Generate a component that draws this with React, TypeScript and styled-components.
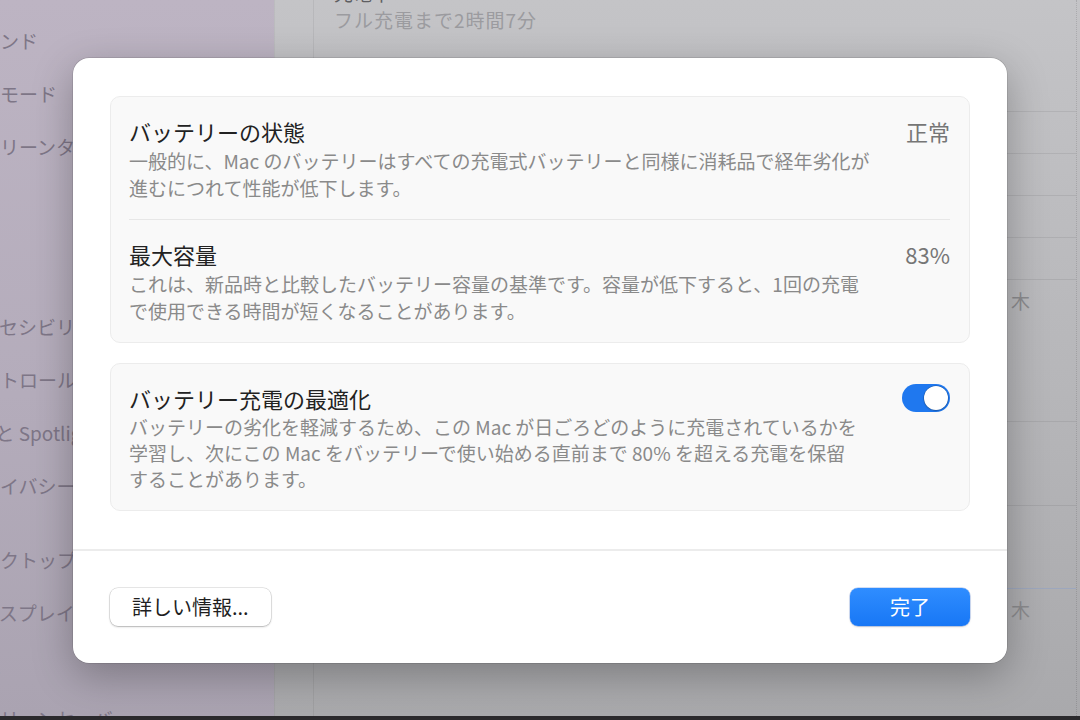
import { FunctionComponent, Fragment } from 'react';
import styled, { createGlobalStyle } from 'styled-components';

const GlobalStyle = createGlobalStyle`
  html, body {
    margin: 0;
    padding: 0;
  }
  body {
    font-family: 'Noto Sans CJK JP', 'Noto Sans', sans-serif;
  }
`;

const Screen = styled.div`
  position: relative;
  width: 1080px;
  height: 720px;
  overflow: hidden;
  display: flex;
  flex-direction: column;
  background: #b0b0b3;
`;

const Desktop = styled.div`
  flex: 1;
  display: flex;
  min-height: 0;
`;

const BottomEdge = styled.div`
  height: 4px;
  background: #2b2a2d;
`;

const Sidebar = styled.div`
  width: 274px;
  flex-shrink: 0;
  background: linear-gradient(180deg, #bdb4c3 0%, #b4acbb 55%, #aaa3b1 100%);
  padding-top: 14px;
  overflow: hidden;
`;

const SideGroup = styled.div<{ $gap?: number }>`
  margin-top: ${(p) => p.$gap || 0}px;
  margin-left: -38px;
`;

const SideItem = styled.div`
  height: 53px;
  line-height: 53px;
  font-size: 19px;
  color: #7e7687;
  white-space: nowrap;
`;

const Main = styled.div`
  flex: 1;
  display: flex;
  padding: 0 3px 0 38px;
  background: linear-gradient(180deg, #c4c4c7 0%, #b6b6b9 55%, #a9a9ac 100%);
  border-left: 1px solid rgba(0, 0, 0, 0.04);
`;

const Panel = styled.div`
  flex: 1;
  display: flex;
  flex-direction: column;
  border-left: 1px solid rgba(0, 0, 0, 0.06);
  border-right: 1px dotted rgba(0, 0, 0, 0.12);
`;

const TopRow = styled.div`
  height: 57px;
  padding-left: 20px;
  overflow: hidden;
`;

const CutTitle = styled.div`
  margin-top: -20px;
  height: 26px;
  font-size: 19px;
  line-height: 26px;
  color: #5e5e62;
`;

const TopSub = styled.div`
  font-size: 19px;
  line-height: 24px;
  margin-top: 2px;
  letter-spacing: 1px;
  color: #9b9b9f;
`;

const Chart = styled.div<{ $top: number }>`
  margin-top: ${(p) => p.$top}px;
  display: flex;
  flex-direction: column;
`;

const GridLine = styled.div<{ $gap: number; $accent?: boolean }>`
  height: 1px;
  margin-bottom: ${(p) => p.$gap}px;
  background: ${(p) => (p.$accent ? '#9da7bd' : 'rgba(0, 0, 0, 0.07)')};
`;

const AxisLabel = styled.div`
  display: flex;
  justify-content: flex-end;
  padding-right: 46px;
  margin-top: -30px;
  font-size: 19px;
  line-height: 24px;
  color: #8b8b8e;
`;

const Dialog = styled.div`
  position: absolute;
  left: 73px;
  top: 58px;
  width: 934px;
  background: #ffffff;
  border-radius: 16px;
  box-shadow: 0 0 0 0.5px rgba(0, 0, 0, 0.18), 0 12px 40px rgba(0, 0, 0, 0.28);
  display: flex;
  flex-direction: column;
  overflow: hidden;
`;

const DialogBody = styled.div`
  display: flex;
  flex-direction: column;
  gap: 20px;
  padding: 38px 37px 38px;
`;

const Group = styled.div`
  background: #f9f9f9;
  border: 1px solid #ececec;
  border-radius: 10px;
  display: flex;
  flex-direction: column;
`;

const Row = styled.div`
  display: flex;
  justify-content: space-between;
  align-items: flex-start;
  padding: 20px 19px 18px 18px;
`;

const RowText = styled.div`
  display: flex;
  flex-direction: column;
  gap: 2px;
`;

const RowTitle = styled.div`
  font-size: 22px;
  line-height: 28px;
  color: #222222;
`;

const RowDesc = styled.div<{ $tight?: boolean }>`
  font-size: 19px;
  line-height: ${(p) => (p.$tight ? '26px' : '27px')};
  color: #8a8a8a;
  white-space: nowrap;
`;

const RowValue = styled.div`
  font-size: 22px;
  line-height: 28px;
  color: #767676;
`;

const Divider = styled.div`
  height: 1px;
  margin: 0 19px 0 18px;
  background: #e7e7e7;
`;

const Toggle = styled.div<{ $on: boolean }>`
  width: 48px;
  height: 28px;
  border-radius: 14px;
  background: ${(p) => (p.$on ? '#1f78ef' : '#e2e2e2')};
  display: flex;
  align-items: center;
  justify-content: ${(p) => (p.$on ? 'flex-end' : 'flex-start')};
  padding: 0 2px;
  box-sizing: border-box;
  flex-shrink: 0;
`;

const Knob = styled.div`
  width: 24px;
  height: 24px;
  border-radius: 50%;
  background: #ffffff;
  box-shadow: 0 0 0 0.5px rgba(0, 0, 0, 0.25), 0 1px 2px rgba(0, 0, 0, 0.2);
`;

const Footer = styled.div`
  border-top: 2px solid #ececec;
  display: flex;
  justify-content: space-between;
  align-items: center;
  padding: 37px 37px 37px;
`;

const Button = styled.button<{ $primary?: boolean }>`
  height: 38px;
  min-width: ${(p) => (p.$primary ? '120px' : '0')};
  padding: 0 ${(p) => (p.$primary ? '16px' : '22px')};
  border-radius: 8px;
  border: none;
  font-family: inherit;
  font-size: 20px;
  line-height: 38px;
  color: ${(p) => (p.$primary ? '#ffffff' : '#1f1f1f')};
  background: ${(p) =>
    p.$primary ? 'linear-gradient(180deg, #2f8dff 0%, #1877f5 100%)' : '#ffffff'};
  box-shadow: ${(p) =>
    p.$primary
      ? '0 0 0 0.5px rgba(0, 70, 200, 0.35), 0 1px 2px rgba(0, 0, 0, 0.15)'
      : '0 0 0 0.5px rgba(0, 0, 0, 0.18), 0 1px 2px rgba(0, 0, 0, 0.22)'};
`;

const sideGroups = [
  { gap: 0, items: ['サウンド', '集中モード', 'スクリーンタイム'] },
  { gap: 21, items: ['一般', '外観', 'アクセシビリティ', 'コントロールセンター', 'Siri と Spotlight', 'プライバシーとセキュリティ'] },
  { gap: 21, items: ['デスクトップとDock', 'ディスプレイ', '壁紙', 'スクリーンセーバ'] },
];

const healthRows = [
  {
    title: 'バッテリーの状態',
    value: '正常',
    lines: [
      '一般的に、Mac のバッテリーはすべての充電式バッテリーと同様に消耗品で経年劣化が',
      '進むにつれて性能が低下します。',
    ],
  },
  {
    title: '最大容量',
    value: '83%',
    lines: [
      'これは、新品時と比較したバッテリー容量の基準です。容量が低下すると、1回の充電',
      'で使用できる時間が短くなることがあります。',
    ],
  },
];

const optimizeLines = [
  'バッテリーの劣化を軽減するため、この Mac が日ごろどのように充電されているかを',
  '学習し、次にこの Mac をバッテリーで使い始める直前まで 80% を超える充電を保留',
  'することがあります。',
];

const App: FunctionComponent = () => {
  return (
    <Screen>
      <GlobalStyle />
      <Desktop>
        <Sidebar>
          {sideGroups.map((g, gi) => (
            <SideGroup key={gi} $gap={g.gap}>
              {g.items.map((item) => (
                <SideItem key={item}>{item}</SideItem>
              ))}
            </SideGroup>
          ))}
        </Sidebar>
        <Main>
          <Panel>
            <TopRow>
              <CutTitle>充電中</CutTitle>
              <TopSub>フル充電まで2時間7分</TopSub>
            </TopRow>
            <Chart $top={54}>
              {[0, 1, 2, 3, 4].map((i) => (
                <GridLine key={i} $gap={i === 4 ? 39 : 41} />
              ))}
              <AxisLabel>木</AxisLabel>
            </Chart>
            <Chart $top={108}>
              <GridLine $gap={83} />
              <GridLine $gap={82} />
              <GridLine $gap={39} $accent />
              <AxisLabel>木</AxisLabel>
            </Chart>
          </Panel>
        </Main>
      </Desktop>
      <BottomEdge />

      <Dialog>
        <DialogBody>
          <Group>
            {healthRows.map((row, i) => (
              <Fragment key={row.title}>
                {i > 0 && <Divider />}
                <Row>
                  <RowText>
                    <RowTitle>{row.title}</RowTitle>
                    <RowDesc>
                      {row.lines.map((l) => (
                        <div key={l}>{l}</div>
                      ))}
                    </RowDesc>
                  </RowText>
                  <RowValue>{row.value}</RowValue>
                </Row>
              </Fragment>
            ))}
          </Group>
          <Group>
            <Row>
              <RowText>
                <RowTitle>バッテリー充電の最適化</RowTitle>
                <RowDesc $tight>
                  {optimizeLines.map((l) => (
                    <div key={l}>{l}</div>
                  ))}
                </RowDesc>
              </RowText>
              <Toggle $on>
                <Knob />
              </Toggle>
            </Row>
          </Group>
        </DialogBody>
        <Footer>
          <Button>詳しい情報...</Button>
          <Button $primary>完了</Button>
        </Footer>
      </Dialog>
    </Screen>
  );
};

export default App;
